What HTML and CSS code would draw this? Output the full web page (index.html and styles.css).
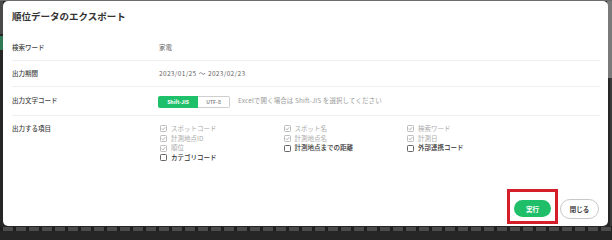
FILE: index.html
```html
<!DOCTYPE html>
<html lang="ja">
<head>
<meta charset="utf-8">
<title>順位データのエクスポート</title>
<link rel="stylesheet" href="styles.css">
</head>
<body>
<div class="modal">
  <div class="modal-header">
    <h1 class="title">順位データのエクスポート</h1>
  </div>
  <div class="modal-body">
    <div class="row">
      <div class="label">検索ワード</div>
      <div class="value">家電</div>
    </div>
    <div class="row">
      <div class="label">出力期間</div>
      <div class="value value-date">2023/01/25 〜 2023/02/23</div>
    </div>
    <div class="row row-code">
      <div class="label">出力文字コード</div>
      <div class="value code-value">
        <div class="toggle">
          <span class="seg seg-on">Shift-JIS</span>
          <span class="seg seg-off">UTF-8</span>
        </div>
        <span class="hint">Excelで開く場合は Shift-JIS を選択してください</span>
      </div>
    </div>
    <div class="row row-items">
      <div class="label">出力する項目</div>
      <div class="items">
        <div class="item item-disabled"><span class="cb cb-checked"><svg viewBox="0 0 7 7" width="7" height="7"><rect x="0.5" y="0.5" width="6" height="6" rx="0.8" fill="#fff" stroke="#bdbdbd"/><path d="M1.8 3.6 L3 4.8 L5.2 2.3" fill="none" stroke="#a8a8a8" stroke-width="0.9"/></svg></span>スポットコード</div>
        <div class="item item-disabled"><span class="cb cb-checked"><svg viewBox="0 0 7 7" width="7" height="7"><rect x="0.5" y="0.5" width="6" height="6" rx="0.8" fill="#fff" stroke="#bdbdbd"/><path d="M1.8 3.6 L3 4.8 L5.2 2.3" fill="none" stroke="#a8a8a8" stroke-width="0.9"/></svg></span>スポット名</div>
        <div class="item item-disabled"><span class="cb cb-checked"><svg viewBox="0 0 7 7" width="7" height="7"><rect x="0.5" y="0.5" width="6" height="6" rx="0.8" fill="#fff" stroke="#bdbdbd"/><path d="M1.8 3.6 L3 4.8 L5.2 2.3" fill="none" stroke="#a8a8a8" stroke-width="0.9"/></svg></span>検索ワード</div>
        <div class="item item-disabled"><span class="cb cb-checked"><svg viewBox="0 0 7 7" width="7" height="7"><rect x="0.5" y="0.5" width="6" height="6" rx="0.8" fill="#fff" stroke="#bdbdbd"/><path d="M1.8 3.6 L3 4.8 L5.2 2.3" fill="none" stroke="#a8a8a8" stroke-width="0.9"/></svg></span>計測地点ID</div>
        <div class="item item-disabled"><span class="cb cb-checked"><svg viewBox="0 0 7 7" width="7" height="7"><rect x="0.5" y="0.5" width="6" height="6" rx="0.8" fill="#fff" stroke="#bdbdbd"/><path d="M1.8 3.6 L3 4.8 L5.2 2.3" fill="none" stroke="#a8a8a8" stroke-width="0.9"/></svg></span>計測地点名</div>
        <div class="item item-disabled"><span class="cb cb-checked"><svg viewBox="0 0 7 7" width="7" height="7"><rect x="0.5" y="0.5" width="6" height="6" rx="0.8" fill="#fff" stroke="#bdbdbd"/><path d="M1.8 3.6 L3 4.8 L5.2 2.3" fill="none" stroke="#a8a8a8" stroke-width="0.9"/></svg></span>計測日</div>
        <div class="item item-disabled"><span class="cb cb-checked"><svg viewBox="0 0 7 7" width="7" height="7"><rect x="0.5" y="0.5" width="6" height="6" rx="0.8" fill="#fff" stroke="#bdbdbd"/><path d="M1.8 3.6 L3 4.8 L5.2 2.3" fill="none" stroke="#a8a8a8" stroke-width="0.9"/></svg></span>順位</div>
        <div class="item"><span class="cb"><svg viewBox="0 0 7 7" width="7" height="7"><rect x="0.5" y="0.5" width="6" height="6" rx="0.8" fill="#fff" stroke="#666"/></svg></span>計測地点までの距離</div>
        <div class="item"><span class="cb"><svg viewBox="0 0 7 7" width="7" height="7"><rect x="0.5" y="0.5" width="6" height="6" rx="0.8" fill="#fff" stroke="#666"/></svg></span>外部連携コード</div>
        <div class="item"><span class="cb"><svg viewBox="0 0 7 7" width="7" height="7"><rect x="0.5" y="0.5" width="6" height="6" rx="0.8" fill="#fff" stroke="#666"/></svg></span>カテゴリコード</div>
      </div>
    </div>
  </div>
  <div class="modal-footer">
    <div class="highlight">
      <button class="btn btn-primary" type="button">実行</button>
    </div>
    <button class="btn btn-secondary" type="button">閉じる</button>
  </div>
</div>
</body>
</html>
```

FILE: styles.css
```css
html, body {
  margin: 0;
  padding: 0;
}
body {
  width: 612px;
  height: 231px;
  overflow: hidden;
  font-family: "Noto Sans CJK JP", "Noto Sans", "Liberation Sans", sans-serif;
  background:
    linear-gradient(#6c6c6c, #6c6c6c) 0 0 / 100% 1px no-repeat,
    linear-gradient(#7a7a7a, #7a7a7a) right 0 top 0 / 5px 78px no-repeat,
    linear-gradient(#3a3a3a, #3a3a3a) right 0 top 78px / 2px 148px no-repeat,
    linear-gradient(#4a4a4a, #4a4a4a) 0 0 / 3px 34px no-repeat,
    linear-gradient(#2f7a55, #2f7a55) 0 36px / 3px 14px no-repeat,
    repeating-linear-gradient(90deg, #1f1f1f 0 3px, #4b4b4b 3px 13px) 0 227px / 100% 4px no-repeat,
    #262626;
}
.modal {
  box-sizing: border-box;
  margin: 1px 0 0 3px;
  width: 605px;
  height: 225px;
  background: #fff;
  border-radius: 5px;
  display: flex;
  flex-direction: column;
}
.modal-header {
  height: 34px;
  box-sizing: border-box;
  padding: 0 9px 2px;
  display: flex;
  align-items: center;
}
.title {
  margin: 0;
  font-size: 9.5px;
  font-weight: 700;
  color: #333;
  line-height: 1;
}
.modal-body {
  padding: 0 8px 0 9px;
}
.row {
  display: flex;
  align-items: center;
  height: 26px;
  box-sizing: border-box;
  border-bottom: 1px solid #efefef;
  font-size: 6.5px;
}
.row-code {
  height: 29px;
}
.row-items {
  height: auto;
  align-items: flex-start;
  padding-top: 8px;
  border-bottom: none;
}
.label {
  width: 147px;
  flex: none;
  color: #444;
  font-weight: 500;
  line-height: 9.6px;
}
.value {
  color: #666;
  line-height: 9.6px;
}
.value-date {
  letter-spacing: 0.35px;
  word-spacing: 0.5px;
}
.code-value {
  display: flex;
  align-items: center;
  margin-left: -1px;
}
.toggle {
  display: flex;
  height: 12px;
  margin-top: 2px;
}
.seg {
  box-sizing: border-box;
  height: 12px;
  display: flex;
  align-items: center;
  justify-content: center;
  font-size: 5.2px;
  font-weight: 700;
}
.seg-on {
  width: 40px;
  background: #1fc06a;
  color: #fff;
  border-radius: 2px 0 0 2px;
}
.seg-off {
  width: 32px;
  color: #777;
  border: 1px solid #cfcfcf;
  border-left: none;
  border-radius: 0 2px 2px 0;
  font-weight: 500;
}
.hint {
  margin-left: 8px;
  color: #9a9a9a;
  font-size: 6.5px;
  letter-spacing: 0.1px;
}
.items {
  display: grid;
  grid-template-columns: 123.5px 123.5px 123.5px;
  grid-auto-rows: 9.7px;
  margin-left: 1px;
}
.item {
  display: flex;
  align-items: center;
  color: #333;
  font-weight: 500;
  font-size: 6.5px;
  line-height: 9.7px;
}
.item-disabled {
  color: #ababab;
  font-weight: 400;
}
.cb {
  width: 7px;
  height: 7px;
  margin-right: 4px;
  display: flex;
}
.cb svg {
  display: block;
}
.modal-footer {
  margin-top: auto;
  display: flex;
  justify-content: flex-end;
  align-items: flex-end;
  padding: 0 9px 2px 0;
}
.highlight {
  border: 3px solid #d41f2b;
  padding: 8px 4px 4px 4px;
  display: flex;
}
.btn {
  font-family: inherit;
  font-size: 6.5px;
  font-weight: 700;
  border-radius: 10px;
  padding: 0;
  cursor: pointer;
}
.btn-primary {
  width: 37px;
  height: 17px;
  background: #1fbf6a;
  color: #fff;
  border: none;
}
.btn-secondary {
  width: 39px;
  height: 20px;
  margin: 0 0 5px 2px;
  background: #fff;
  color: #444;
  border: 1px solid #c8c8c8;
}
```
